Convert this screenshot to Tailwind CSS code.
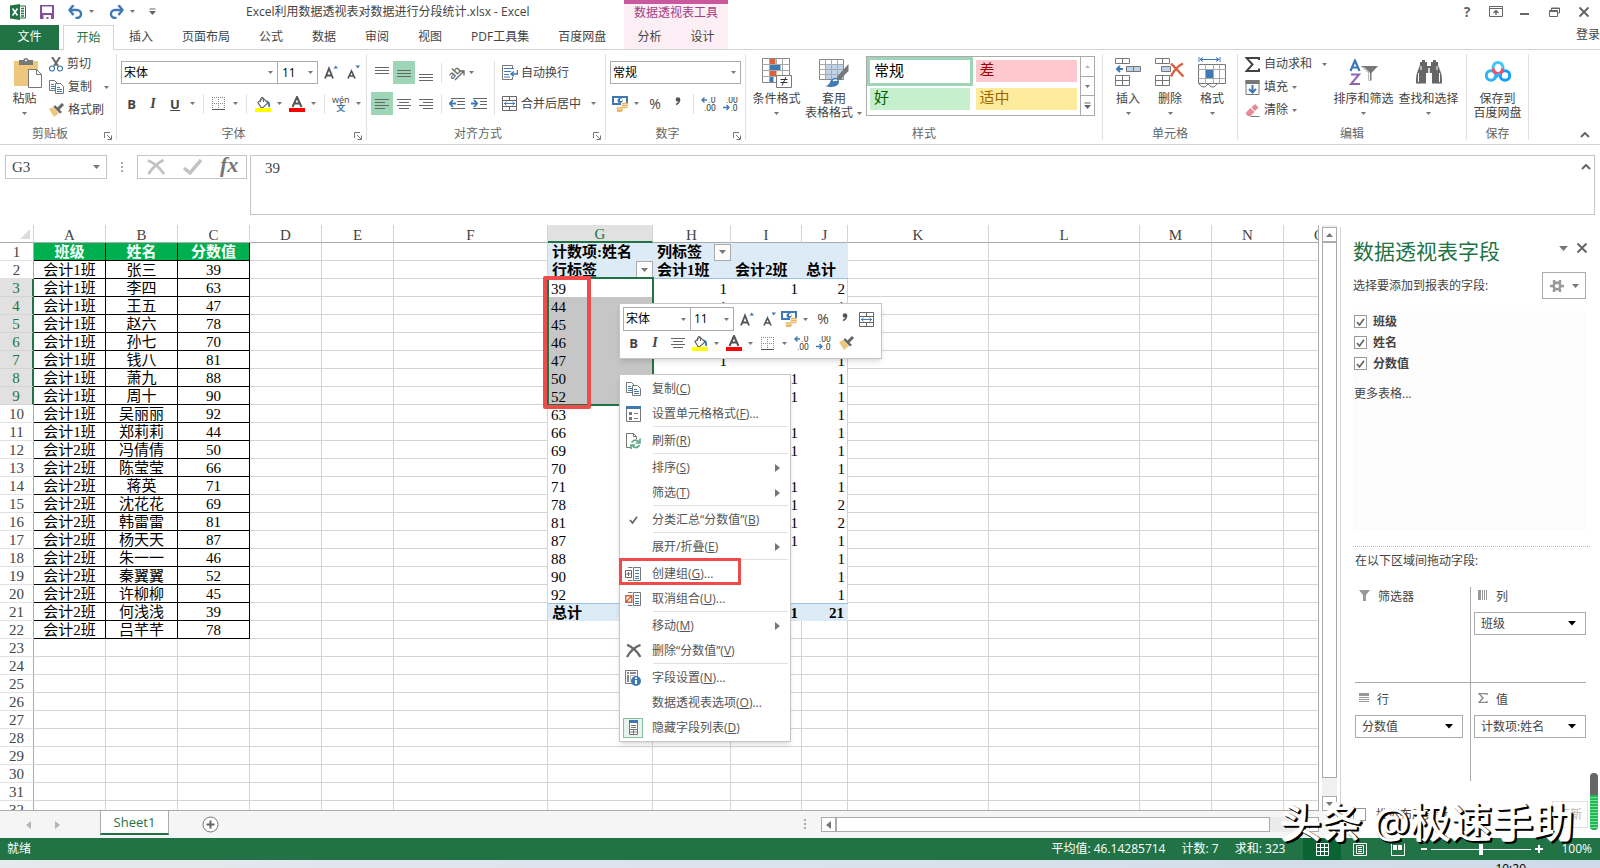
<!DOCTYPE html>
<html lang="zh-CN">
<head>
<meta charset="utf-8">
<title>Excel利用数据透视表对数据进行分段统计.xlsx - Excel</title>
<script src="https://cdn.jsdelivr.net/npm/@tailwindcss/browser@4"></script>
</head>
<body class="flex h-screen flex-col overflow-hidden bg-white font-['Open_Sans','Noto_Sans_CJK_SC',sans-serif] text-xs leading-4 text-[#444]">

<svg class="hidden" aria-hidden="true">
  <symbol id="dn" viewBox="0 0 7 4"><path d="M0 0h7L3.500 4z" fill="#777"/></symbol>
  <symbol id="dnk" viewBox="0 0 8 5"><path d="M0 0h8L4 4.500z" fill="#000"/></symbol>
  <symbol id="up" viewBox="0 0 7 4"><path d="M0 4h7L3.500 0z" fill="#777"/></symbol>
  <symbol id="upl" viewBox="0 0 7 4"><path d="M0 4h7L3.500 0z" fill="#bbb"/></symbol>
  <symbol id="rt" viewBox="0 0 5 8"><path d="M0 0v8l5-4z" fill="#777"/></symbol>
  <symbol id="lt" viewBox="0 0 5 8"><path d="M5 0v8L0 4z" fill="#777"/></symbol>
  <symbol id="x" viewBox="0 0 12 12"><path d="M1.500 1.500l9 9M10.500 1.500l-9 9" stroke="#666" stroke-width="2" fill="none"/></symbol>
  <symbol id="chev" viewBox="0 0 10 6"><path d="M1 5l4-4 4 4" stroke="#666" stroke-width="2" fill="none"/></symbol>
  <symbol id="launch" viewBox="0 0 8 8"><path d="M.5 6V.5H6M3 3l4 4M7.500 3.500v4h-4" stroke="#777" fill="none"/></symbol>
  <symbol id="xl" viewBox="0 0 16 16"><path d="M9 2h6.500v12H9" fill="#fff" stroke="#217346"/><path d="M11 4.500h3M11 7h3M11 9.500h3M11 12h3" stroke="#217346" stroke-width="1.500"/><path d="M0 1.500L10 0v16L0 14.500z" fill="#217346"/><path d="M2.500 4.500l5 7M7.500 4.500l-5 7" stroke="#fff" stroke-width="1.600"/></symbol>
  <symbol id="save" viewBox="0 0 14 14"><path d="M0 0h14v14H0z" fill="#8151a0"/><path d="M2 1.500h10V8H2zM3.500 10h7.500v4H8.500v-2H6.500v2h-3z" fill="#fff"/></symbol>
  <symbol id="undo" viewBox="0 0 15 14"><path d="M1 5h8a4 4 0 0 1 0 8H7.500" stroke="#3f79b5" stroke-width="2.400" fill="none"/><path d="M5.500 0L1.500 5l4 5" stroke="#3f79b5" stroke-width="2.400" fill="none"/></symbol>
  <symbol id="redo" viewBox="0 0 15 14"><path d="M14 5H6a4 4 0 0 0 0 8h1.500" stroke="#3f79b5" stroke-width="2.400" fill="none"/><path d="M9.500 0l4 5-4 5" stroke="#3f79b5" stroke-width="2.400" fill="none"/></symbol>
  <symbol id="qat" viewBox="0 0 7 7"><path d="M.5 1h6" stroke="#666"/><path d="M0 3h7L3.500 7z" fill="#666"/></symbol>
  <symbol id="ropt" viewBox="0 0 14 11"><path d="M.5.5h13v10H.5zM.5 2.500h13" stroke="#666" fill="none"/><path d="M7 9V5M4.500 7L7 4.500 9.500 7" stroke="#666" stroke-width="1.300" fill="none"/></symbol>
  <symbol id="rest" viewBox="0 0 11 10"><path d="M2.500 3V1h8v5h-2M.5 3.500h8v6h-8zM.5 4.500h8M2.500 1.500h8" stroke="#666" fill="none"/></symbol>
  <symbol id="paste" viewBox="0 0 28 30"><path d="M0 3h24v25H0z" fill="#edc77c"/><path d="M5 2h4q3-4 6 0h4v5H5z" fill="#777"/><circle cx="12" cy="2.500" r="1" fill="#fff"/><path d="M14.500 11.500h8l5 5v13h-13z" fill="#fff" stroke="#777"/><path d="M22.500 11.500v5h5" fill="none" stroke="#777"/></symbol>
  <symbol id="cut" viewBox="0 0 14 15"><path d="M3 0l6 9M11 0L5 9" stroke="#666" stroke-width="2"/><circle cx="3" cy="11.500" r="2.500" fill="#fff" stroke="#3f79b5" stroke-width="1.200"/><circle cx="11" cy="11.500" r="2.500" fill="#fff" stroke="#3f79b5" stroke-width="1.200"/></symbol>
  <symbol id="copy" viewBox="0 0 15 14"><path d="M.5.5h5l3 3v7h-8z" fill="#fff" stroke="#777"/><path d="M2 4.500h3M2 6.500h4M2 8.500h4" stroke="#3f79b5"/><path d="M6.500 3.500h5l3 3v7h-8z" fill="#fff" stroke="#777"/><path d="M8 7.500h3M8 9.500h5M8 11.500h5" stroke="#3f79b5"/></symbol>
  <symbol id="brush" viewBox="0 0 16 14"><path d="M0 6l4-2 6 6-5 4z" fill="#edc77c"/><path d="M6 2l7 7-2 1.500L4.500 4z" fill="#666"/><path d="M9 6l5-5" stroke="#666" stroke-width="3"/></symbol>
  <symbol id="Abig" viewBox="0 0 14 15"><path d="M9.500 3.500l2.250-3 2.250 3z" fill="#3f79b5"/><path d="M1 13.500L5 3.500 9 13.500M2.500 10.500h5" fill="none" stroke="#555" stroke-width="1.800"/></symbol>
  <symbol id="Asm" viewBox="0 0 14 15"><path d="M9.500.5l2.250 3 2.250-3z" fill="#3f79b5"/><path d="M2 13.500L5.500 6 9 13.500M3.500 11h4" fill="none" stroke="#555" stroke-width="1.700"/></symbol>
  <symbol id="bord" viewBox="0 0 13 13"><path d="M.5 0v12M6.500 0v12M12.500 0v12M0 .5h13M0 6.500h13" stroke="#888" stroke-dasharray="1 1" fill="none"/><path d="M0 12.500h13" stroke="#555"/></symbol>
  <symbol id="fill" viewBox="0 0 16 16"><path d="M3 6.500L8 2l5 5-5 4.500H6z" fill="#fff" stroke="#666" stroke-width="1.200"/><path d="M5.500 6V2.500Q7 -.5 8.500 2.500V6" fill="none" stroke="#666"/><path d="M11 4.500q5 0 4 6.500-2 1-2-3z" fill="#3f79b5"/><path d="M0 12h16v4H0z" fill="#ff0"/></symbol>
  <symbol id="fcol" viewBox="0 0 16 16"><path d="M3.500 11L8 1l4.500 10M5 7.500h6" fill="none" stroke="#555" stroke-width="2"/><path d="M0 12h16v4H0z" fill="red"/></symbol>
  <symbol id="at" viewBox="0 0 14 12"><path d="M0 .5h14M0 3.500h14M0 6.500h14" stroke="#666"/></symbol>
  <symbol id="am" viewBox="0 0 14 12"><path d="M0 3.500h14M0 6.500h14M0 9.500h14" stroke="#666"/></symbol>
  <symbol id="ab" viewBox="0 0 14 12"><path d="M0 5.500h14M0 8.500h14M0 11.500h14" stroke="#666"/></symbol>
  <symbol id="al" viewBox="0 0 14 12"><path d="M0 1.500h14M0 4.500h10M0 7.500h14M0 10.500h10" stroke="#666"/></symbol>
  <symbol id="ac" viewBox="0 0 14 12"><path d="M0 1.500h14M2 4.500h10M0 7.500h14M2 10.500h10" stroke="#666"/></symbol>
  <symbol id="ar" viewBox="0 0 14 12"><path d="M0 1.500h14M4 4.500h10M0 7.500h14M4 10.500h10" stroke="#666"/></symbol>
  <symbol id="orient" viewBox="0 0 16 16"><text x="-1" y="11" transform="rotate(-45 6 8)" font-family="Open Sans" font-size="11" font-weight="600" fill="#666">ab</text><path d="M6 15l9-9M10.500 6H15v4.500" stroke="#666" stroke-width="1.300" fill="none"/></symbol>
  <symbol id="outd" viewBox="0 0 16 12"><path d="M2 .5h14M8 3.500h8M8 6.500h8M2 10.500h14" stroke="#666"/><path d="M7 5.500H1M4 2L.8 5.500 4 9" stroke="#3f79b5" stroke-width="1.800" fill="none"/></symbol>
  <symbol id="ind" viewBox="0 0 16 12"><path d="M2 .5h14M9 3.500h7M9 6.500h7M2 10.500h14" stroke="#666"/><path d="M0 5.500h6M3 2l3.200 3.500L3 9" stroke="#3f79b5" stroke-width="1.800" fill="none"/></symbol>
  <symbol id="wrap" viewBox="0 0 16 15"><path d="M10.500 4V.5H.5v14h10V12" stroke="#777" fill="none"/><path d="M2 3.500h10M2 6.500h7M2 9.500h5M2 12h6" stroke="#3f79b5"/><path d="M15.500 5v4H9.500M12 6.500L9 9l3 2.500" stroke="#3f79b5" stroke-width="1.400" fill="none"/></symbol>
  <symbol id="merge" viewBox="0 0 15 15"><path d="M.5.5h14v14H.5zM.5 4.500h14M.5 10.500h14M7.500.5v4M7.500 10.500v4" stroke="#666" fill="none"/><path d="M2 7.500h11M4.500 5.500l-2 2 2 2M10.500 5.500l2 2-2 2" stroke="#3f79b5" fill="none"/></symbol>
  <symbol id="coin" viewBox="0 0 16 16"><path d="M0 0h16v9H0z" fill="#3f79b5"/><path d="M2 2h12v5H2z" fill="#fff"/><circle cx="8" cy="4.500" r="2.500" fill="#3f79b5"/><path d="M8 3h2v2H8z" fill="#fff"/><path d="M9 7h7v6H9zM4 11h7v5H4z" fill="#fff"/><path d="M10 7.500h6M9.500 9.500h6.500M9.500 11.500h6M4.500 12h6M5 14h6M5 15.500h5" stroke="#e8b868" stroke-width="1.400"/></symbol>
  <symbol id="comma" viewBox="0 0 6 9"><circle cx="3" cy="2.500" r="2.300" fill="#555"/><path d="M4.600 2.500Q4.600 6 1 7.500" stroke="#555" stroke-width="1.400" fill="none"/></symbol>
  <symbol id="incd" viewBox="0 0 15 14"><path d="M6 3H1M3.500.5L1 3l2.500 2.500" stroke="#3f79b5" stroke-width="1.400" fill="none"/><text x="7.500" y="6" font-family="Roboto" font-size="8.500" fill="#333">.0</text><text x="3" y="13.500" font-family="Roboto" font-size="8.500" fill="#333">.00</text></symbol>
  <symbol id="decd" viewBox="0 0 15 14"><path d="M0 10.500h5.500M3.500 8L6 10.500 3.500 13" stroke="#3f79b5" stroke-width="1.400" fill="none"/><text x="3" y="6" font-family="Roboto" font-size="8.500" fill="#333">.00</text><text x="7.500" y="13.500" font-family="Roboto" font-size="8.500" fill="#333">.0</text></symbol>
  <symbol id="cond" viewBox="0 0 30 30"><path d="M.5.5h27v24H.5z" fill="#fff" stroke="#888"/><path d="M7.500 1h6v5h-6zM7.500 13h7v5h-7z" fill="#d9603f"/><path d="M7.500 7h11v5h-11zM7.500 19h4v5h-4z" fill="#3f79b5"/><path d="M.5 6.500h27M.5 12.500h27M.5 18.500h27M7.500.5v24M14.500.5v6M20.500.5v24" stroke="#aaa" fill="none"/><path d="M14.500 17.500h15v12h-15z" fill="#fff" stroke="#777"/><path d="M18.500 21.500h7M18.500 24.500h7M24 19l-4 8.500" stroke="#333"/></symbol>
  <symbol id="tfmt" viewBox="0 0 30 30"><path d="M.5.500h24v20H.5z" fill="#fff" stroke="#888"/><path d="M6 6h18v14H6z" fill="#bed2e8"/><path d="M.5 5.500h24M.5 10.500h24M.5 15.500h24M6.500.500v20M12.500.500v20M18.500.500v20" stroke="#aaa"/><path d="M29.500 5v7l-7 7-3-3z" fill="#777"/><circle cx="20.500" cy="18.500" r="2.500" fill="#777"/><path d="M6 27q4 0 6-6 4-4 7-1 3 4-2 7-5 2-11 0z" fill="#3f79b5"/><path d="M14 22q3-2 4 0" stroke="#fff" stroke-width="1.500" fill="none"/></symbol>
  <symbol id="cins" viewBox="0 0 27 28"><path d="M.5.500h14v5H.5zM7.500.500v5M.5 17.500h14v10H.5zM7.500 17.500v10M.5 22.500h14" stroke="#777" fill="#fff"/><path d="M11.500 8.500h14v5h-14zM18.500 8.500v5" fill="#bed2e8" stroke="#777"/><path d="M8 11H2M5 8l-3 3 3 3" stroke="#3f79b5" stroke-width="2" fill="none"/></symbol>
  <symbol id="cdel" viewBox="0 0 30 28"><path d="M.5.500h14v5H.5zM7.500.500v5M.5 17.500h14v10H.5zM7.500 17.500v10M.5 22.500h14" stroke="#777" fill="#fff"/><path d="M6.500 8.500h9v5h-9z" fill="#bed2e8" stroke="#777"/><path d="M16 5.500l12.500 13M28 5.500q-8 4-12 13" stroke="#d9603f" stroke-width="2.500" fill="none"/></symbol>
  <symbol id="cfmt" viewBox="0 0 28 31"><path d="M1 0v5M22 0v5M2 2.500h19M5 .500l-3 2 3 2M18 .500l3 2-3 2" stroke="#3f79b5" fill="none"/><path d="M.5 7.500h27v19H.5z" fill="#fff" stroke="#777"/><path d="M.5 12.500h27M.5 21.500h27M7.500 7.500v19M15.500 7.500v19M21.500 7.500v19" stroke="#aaa"/><path d="M8 13h7v8H8z" fill="#3f79b5"/><path d="M1 27q3 4 6 3l3-3q3 4 6 3l3-3" stroke="#777" fill="none"/></symbol>
  <symbol id="sum" viewBox="0 0 15 15"><path d="M14 3V1H1.500l6 6.500-6 6.500H14v-2.500" stroke="#444" stroke-width="2" fill="none"/></symbol>
  <symbol id="filld" viewBox="0 0 14 15"><path d="M.5.500h13v14H.5z" fill="#fff" stroke="#777"/><path d="M0 0h14v4H0z" fill="#777"/><path d="M7 5v7M3.500 9L7 12.500 10.500 9" stroke="#3f79b5" stroke-width="2" fill="none"/></symbol>
  <symbol id="eras" viewBox="0 0 14 13"><path d="M6 3l4-3 3 4-4 3z" fill="#e8899a"/><path d="M5 4l4 4-4 4H2L0 9z" fill="#e8899a"/><path d="M5 12.500h9" stroke="#777"/></symbol>
  <symbol id="sort" viewBox="0 0 30 27"><path d="M1.500 12L6 1.500 10.500 12M3 8.500h6" stroke="#3f79b5" stroke-width="2.200" fill="none"/><path d="M2 15.500h8L2 25h9" stroke="#9163b5" stroke-width="2" fill="none"/><path d="M12 7h17l-6.500 7v7.500h-3V14z" fill="#777"/><path d="M14.500 8l6 6v7" stroke="#fff" fill="none"/></symbol>
  <symbol id="bino" viewBox="0 0 26 24"><path d="M4 5V2h2V0h3v2h2v4h4V2h2V0h3v2h2v3l3 8q1 2 1 10.500H16V13h-6v10.500H0Q0 15 1 13z" fill="#666"/><path d="M13 8v5" stroke="#fff" stroke-width="1.500"/><path d="M2.500 13v9M23.500 13v9M5 6v4M21 6v4" stroke="#fff"/></symbol>
  <symbol id="pan" viewBox="0 0 26 21"><circle cx="6" cy="14.500" r="4.700" fill="none" stroke="#2fb5f5" stroke-width="3"/><circle cx="20" cy="14.500" r="4.700" fill="none" stroke="#12a0f8" stroke-width="3"/><path d="M8 8q0-6.500 5-6.500T18 8" fill="none" stroke="#45c8f8" stroke-width="3"/><path d="M8.300 7.500q.500 5 4.700 5t4.700-5" fill="none" stroke="#f2506a" stroke-width="3"/><path d="M15 12.500l-6 5" stroke="#2fb5f5" stroke-width="3"/></symbol>
  <symbol id="bigx" viewBox="0 0 18 16"><path d="M1 1.500Q10 5 17 15M16.500 1Q7 6 1.500 15" stroke="#c3c3c3" stroke-width="2.800" fill="none"/></symbol>
  <symbol id="bigc" viewBox="0 0 19 16"><path d="M1 9l6 5L18 1" stroke="#c3c3c3" stroke-width="3.500" fill="none"/></symbol>
  <symbol id="dots" viewBox="0 0 2 10"><path d="M0 0h2v2H0zM0 4h2v2H0zM0 8h2v2H0z" fill="#aaa"/></symbol>
  <symbol id="gear" viewBox="0 0 14 12"><circle cx="7" cy="6" r="3.400" fill="none" stroke="#999" stroke-width="2.600"/><path d="M4 0v3M10 0v3M4 9v3M10 9v3M0 6h3M11 6h3" stroke="#999" stroke-width="2.400"/></symbol>
  <symbol id="tick" viewBox="0 0 9 8"><path d="M1 4l2.500 3L8 .800" stroke="#666" stroke-width="1.700" fill="none"/></symbol>
  <symbol id="funnel" viewBox="0 0 11 11"><path d="M0 0h11L7 5v6H4V5z" fill="#999"/></symbol>
  <symbol id="cols" viewBox="0 0 10 10"><path d="M0 0h3v10H0zM4 0h1v10H4zM6 0h1v10H6zM8 0h1v10H8z" fill="#999"/></symbol>
  <symbol id="rows" viewBox="0 0 10 10"><path d="M0 0h10v3H0zM0 4h10v1H0zM0 6h10v1H0zM0 8h10v1H0z" fill="#999"/></symbol>
  <symbol id="sigma" viewBox="0 0 10 10"><path d="M9 2V.600H1L5 5 1 9.400h8V8" stroke="#888" stroke-width="1.400" fill="none"/></symbol>
  <symbol id="plus" viewBox="0 0 17 17"><circle cx="8.500" cy="8.500" r="7.500" fill="#fff" stroke="#777"/><path d="M8.500 4.500v8M4.500 8.500h8" stroke="#666" stroke-width="2"/></symbol>
  <symbol id="fmtc" viewBox="0 0 15 16"><path d="M.5.500h14v15H.5z" fill="#fff" stroke="#777"/><path d="M0 0h15v3H0z" fill="#3f79b5"/><path d="M3 6h3v3H3zM3 11h3v3H3z" fill="#777"/><path d="M8 7.500h4M8 12.500h4" stroke="#777"/></symbol>
  <symbol id="refr" viewBox="0 0 15 16"><path d="M5 14.500H.5V.500h7l3 3V6M7.500.500v3h3" stroke="#777" fill="none"/><path d="M5.500 9.500q4-4.500 7.500-.500M14 5.500V10H9.500M13.500 12q-3 4.500-7 1M5 16v-4h4" stroke="#5fa98a" stroke-width="1.700" fill="none"/></symbol>
  <symbol id="grp" viewBox="0 0 16 14"><path d="M8.500.500h7v13h-7zM3 .500h4.500M3 13.500h4.500" stroke="#777" fill="none"/><path d="M10 3.500h4M10 6.500h4M10 9.500h4M10 11.500h4" stroke="#3f79b5"/><path d="M.5 3.500h6v7h-6zM3.500 5v4M1.500 7h4" stroke="#666" fill="none"/></symbol>
  <symbol id="ugrp" viewBox="0 0 16 14"><path d="M8.500.500h7v13h-7zM3 .500h4.500M3 13.500h4.500" stroke="#777" fill="none"/><path d="M10 3.500h4M10 6.500h4M10 9.500h4M10 11.500h4" stroke="#3f79b5"/><path d="M.8 3.800h6v6.500h-6zM6.500 4L1 10" stroke="#d9603f" stroke-width="1.400" fill="none"/></symbol>
  <symbol id="delx" viewBox="0 0 15 14"><path d="M1 .800Q9 4 14.500 13M14.500 1Q6 4 1 13" stroke="#666" stroke-width="2.300" fill="none"/></symbol>
  <symbol id="finfo" viewBox="0 0 16 16"><path d="M.5.500h12v13H.5z" fill="#fff" stroke="#777"/><path d="M2 2h2v2H2zM5 2h6v2H5zM2 5h2v7H2z" fill="#888"/><path d="M5.500 5.500h5v6h-5z" stroke="#bbb" fill="none"/><circle cx="11" cy="11" r="5" fill="#3f79b5"/><path d="M10 10h2v4h-2zM10 7.500h2v1.500h-2z" fill="#fff"/></symbol>
  <symbol id="flist" viewBox="0 0 9 15"><path d="M.5.500h8v14h-8z" fill="#fff" stroke="#777"/><path d="M0 0h9v3H0z" fill="#3f79b5"/><path d="M2 5.500h5M2 7.500h5M.500 9.500h8M.500 12h8M4.500 9.500V14" stroke="#777"/></symbol>
  <symbol id="vnorm" viewBox="0 0 13 13"><path d="M.5.500h12v12H.5zM.5 4.500h12M.5 8.500h12M4.500.500v12M8.500.500v12" stroke="#fff" fill="none"/></symbol>
  <symbol id="vpage" viewBox="0 0 14 13"><path d="M.5.500h13v12H.5zM3.500 2.500h7v8h-7zM5 4.500h4M5 6.500h4M5 8.500h4" stroke="#fff" fill="none"/></symbol>
  <symbol id="vbrk" viewBox="0 0 14 13"><path d="M.5.500v12h13V.500" stroke="#fff" fill="none"/><path d="M2 2h4v5H2zM7 2h4v5H7z" fill="#fff"/></symbol>
</svg>

<header class="shrink-0">
  <div class="flex h-[25px] items-start">
    <div class="flex h-[23px] w-[624px] items-center">
      <svg class="ml-2.5 size-4"><use href="#xl"/></svg>
      <button aria-label="保存" class="ml-3.5"><svg class="size-3.5"><use href="#save"/></svg></button>
      <button aria-label="撤销" class="ml-3.5 flex items-center gap-1.5"><svg class="h-3.5 w-[15px]"><use href="#undo"/></svg><svg class="h-[3px] w-[5px]"><use href="#dn"/></svg></button>
      <button aria-label="恢复" class="ml-[15px] flex items-center gap-1.5"><svg class="h-3.5 w-[15px]"><use href="#redo"/></svg><svg class="h-[3px] w-[5px]"><use href="#dn"/></svg></button>
      <button aria-label="自定义快速访问工具栏" class="ml-3.5"><svg class="size-[7px]"><use href="#qat"/></svg></button>
      <h1 class="ml-[90px] whitespace-nowrap">Excel利用数据透视表对数据进行分段统计.xlsx - Excel</h1>
    </div>
    <div class="h-full w-[104px] border-t-4 border-[#c9589c] bg-[#fbeef5] text-center leading-[18px] text-[#a63c80]">数据透视表工具</div>
    <div class="ml-auto flex h-[23px] items-center pr-2.5">
      <button aria-label="帮助" class="w-5 text-sm font-bold text-[#666]">?</button>
      <button aria-label="功能区显示选项" class="ml-3"><svg class="h-[11px] w-3.5"><use href="#ropt"/></svg></button>
      <button aria-label="最小化" class="ml-[17px] flex h-4 w-[9px] items-center"><span class="mt-1 h-0.5 w-full bg-[#666]"></span></button>
      <button aria-label="还原" class="ml-5"><svg class="h-2.5 w-[11px]"><use href="#rest"/></svg></button>
      <button aria-label="关闭" class="ml-[18px]"><svg class="size-3"><use href="#x"/></svg></button>
    </div>
  </div>
  <nav class="flex h-[25px] border-b border-[#d4d4d4]">
    <div class="flex w-[624px] shrink-0 items-center">
      <button class="h-[25px] w-[59px] bg-[#217346] text-white">文件</button>
      <button class="ml-1 h-[25px] w-[51px] self-start border border-b-0 border-[#d4d4d4] bg-white text-[#217346]">开始</button>
      <div class="ml-[15px] flex gap-[29px] whitespace-nowrap">
        <button>插入</button><button>页面布局</button><button>公式</button><button>数据</button><button>审阅</button><button>视图</button><button>PDF工具集</button><button>百度网盘</button>
      </div>
    </div>
    <div class="flex w-[104px] items-center justify-center gap-[29px] bg-[#fbeef5]"><button>分析</button><button>设计</button></div>
    <a href="#login" class="ml-auto pt-0.5 whitespace-nowrap">登录</a>
  </nav>
</header>

<section aria-label="功能区" class="flex h-[95px] shrink-0 border-b border-[#d4d4d4] pt-1 pb-1 leading-[14px]">
  <!-- 剪贴板 -->
  <div class="flex w-[117px] shrink-0 flex-col border-r border-[#e1e1e1]">
    <div class="flex flex-1">
      <button class="flex w-[49px] flex-col items-center pt-1"><svg class="ml-1.5 h-[30px] w-7"><use href="#paste"/></svg><span class="mt-1">粘贴</span><svg class="mt-1.5 h-[3px] w-[5px]"><use href="#dn"/></svg></button>
      <div class="flex flex-col gap-[3px]">
        <button class="flex h-5 items-center gap-1"><svg class="h-[15px] w-3.5"><use href="#cut"/></svg>剪切</button>
        <button class="flex h-5 items-center gap-1"><svg class="h-3.5 w-[15px]"><use href="#copy"/></svg>复制<svg class="ml-2 h-[3px] w-[5px]"><use href="#dn"/></svg></button>
        <button class="flex h-5 items-center gap-[3px]"><svg class="h-3.5 w-4"><use href="#brush"/></svg>格式刷</button>
      </div>
    </div>
    <div class="relative h-4 pr-4 text-center leading-5 text-[#666]">剪贴板<button aria-label="剪贴板选项" class="absolute right-1 bottom-0"><svg class="size-2"><use href="#launch"/></svg></button></div>
  </div>
  <!-- 字体 -->
  <div class="flex w-[250px] shrink-0 flex-col border-r border-[#e1e1e1]">
    <div class="flex flex-1 flex-col gap-2 pt-[7px] pl-1">
      <div class="flex h-[23px] items-center">
        <div class="relative h-full w-[157px] border border-[#ababab]"><select aria-label="字体" class="h-full w-full appearance-none pl-0.5 text-black"><option>宋体</option></select><svg class="pointer-events-none absolute top-[9px] right-1 h-[3px] w-[5px]"><use href="#dn"/></svg></div>
        <div class="relative h-full w-10 border border-l-0 border-[#ababab]"><select aria-label="字号" class="h-full w-full appearance-none pl-1 text-black"><option>11</option></select><svg class="pointer-events-none absolute top-[9px] right-1 h-[3px] w-[5px]"><use href="#dn"/></svg></div>
        <button aria-label="增大字号" class="ml-1.5"><svg class="h-[15px] w-3.5"><use href="#Abig"/></svg></button>
        <button aria-label="减小字号" class="ml-2"><svg class="h-[15px] w-3.5"><use href="#Asm"/></svg></button>
      </div>
      <div class="flex h-[23px] items-center">
        <button class="w-[21px] text-[13px] font-bold">B</button>
        <button class="w-[22px] font-['Liberation_Serif'] text-sm font-bold italic">I</button>
        <button class="w-[22px] text-[13px] font-bold underline">U</button>
        <svg class="ml-1 h-[3px] w-[5px]"><use href="#dn"/></svg>
        <span class="ml-2 h-5 w-px bg-[#e1e1e1]"></span>
        <button aria-label="边框" class="ml-2 flex items-center gap-2"><svg class="size-[13px]"><use href="#bord"/></svg><svg class="h-[3px] w-[5px]"><use href="#dn"/></svg></button>
        <span class="ml-2 h-5 w-px bg-[#e1e1e1]"></span>
        <button aria-label="填充颜色" class="ml-2 flex items-center gap-1.5"><svg class="size-4"><use href="#fill"/></svg><svg class="h-[3px] w-[5px]"><use href="#dn"/></svg></button>
        <button aria-label="字体颜色" class="ml-[7px] flex items-center gap-1.5"><svg class="size-4"><use href="#fcol"/></svg><svg class="h-[3px] w-[5px]"><use href="#dn"/></svg></button>
        <span class="ml-2 h-5 w-px bg-[#e1e1e1]"></span>
        <button aria-label="拼音" class="ml-[7px] flex items-center gap-1.5"><span class="flex flex-col items-center text-[9px] leading-[8px]">wén<span class="font-bold text-[#3f79b5]">文</span></span><svg class="h-[3px] w-[5px]"><use href="#dn"/></svg></button>
      </div>
    </div>
    <div class="relative h-4 pr-4 text-center leading-5 text-[#666]">字体<button aria-label="字体选项" class="absolute right-1 bottom-0"><svg class="size-2"><use href="#launch"/></svg></button></div>
  </div>
  <!-- 对齐方式 -->
  <div class="flex w-[239px] shrink-0 flex-col border-r border-[#e1e1e1]">
    <div class="flex flex-1 pt-[7px] pl-1">
      <div class="flex flex-col gap-2">
        <div class="flex h-[23px] items-center">
          <button aria-label="顶端对齐" class="flex h-full w-[22px] items-center justify-center"><svg class="h-3 w-3.5"><use href="#at"/></svg></button>
          <button aria-label="垂直居中" class="flex h-full w-[22px] items-center justify-center bg-[#9fd5b7]"><svg class="h-3 w-3.5"><use href="#am"/></svg></button>
          <button aria-label="底端对齐" class="flex h-full w-[22px] items-center justify-center pt-1"><svg class="h-3 w-3.5"><use href="#ab"/></svg></button>
          <span class="ml-1 h-5 w-px bg-[#e1e1e1]"></span>
          <button aria-label="方向" class="ml-[7px] flex items-center gap-1"><svg class="size-4"><use href="#orient"/></svg><svg class="h-[3px] w-[5px]"><use href="#dn"/></svg></button>
        </div>
        <div class="flex h-[23px] items-center">
          <button aria-label="左对齐" class="flex h-full w-[22px] items-center justify-center bg-[#9fd5b7]"><svg class="h-3 w-3.5"><use href="#al"/></svg></button>
          <button aria-label="居中" class="flex h-full w-[22px] items-center justify-center"><svg class="h-3 w-3.5"><use href="#ac"/></svg></button>
          <button aria-label="右对齐" class="flex h-full w-[22px] items-center justify-center"><svg class="h-3 w-3.5"><use href="#ar"/></svg></button>
          <span class="ml-1 h-5 w-px bg-[#e1e1e1]"></span>
          <button aria-label="减少缩进量" class="ml-[7px]"><svg class="h-3 w-4"><use href="#outd"/></svg></button>
          <button aria-label="增加缩进量" class="ml-1.5"><svg class="h-3 w-4"><use href="#ind"/></svg></button>
        </div>
      </div>
      <div class="ml-[7px] flex h-[54px] flex-col gap-2 border-l border-[#e1e1e1] pl-[7px]">
        <button class="flex h-[23px] items-center gap-[3px]"><svg class="h-[15px] w-4"><use href="#wrap"/></svg>自动换行</button>
        <button class="flex h-[23px] items-center gap-1"><svg class="size-[15px]"><use href="#merge"/></svg>合并后居中<svg class="ml-1.5 h-[3px] w-[5px]"><use href="#dn"/></svg></button>
      </div>
    </div>
    <div class="relative h-4 pr-8 pl-4 text-center leading-5 text-[#666]">对齐方式<button aria-label="对齐选项" class="absolute right-1 bottom-0"><svg class="size-2"><use href="#launch"/></svg></button></div>
  </div>
  <!-- 数字 -->
  <div class="flex w-[140px] shrink-0 flex-col border-r border-[#e1e1e1]">
    <div class="flex flex-1 flex-col gap-2 px-1 pt-[7px]">
      <div class="relative h-[23px] border border-[#ababab]"><select aria-label="数字格式" class="h-full w-full appearance-none pl-0.5 text-black"><option>常规</option></select><svg class="pointer-events-none absolute top-[9px] right-1 h-[3px] w-[5px]"><use href="#dn"/></svg></div>
      <div class="flex h-[23px] items-center">
        <button aria-label="会计数字格式" class="ml-0.5 flex items-center gap-1.5"><svg class="size-4"><use href="#coin"/></svg><svg class="h-[3px] w-[5px]"><use href="#dn"/></svg></button>
        <button class="ml-2 w-4 text-sm">%</button>
        <button aria-label="千位分隔" class="ml-3 mb-1"><svg class="h-[9px] w-1.5"><use href="#comma"/></svg></button>
        <span class="ml-3 h-5 w-px bg-[#e1e1e1]"></span>
        <button aria-label="增加小数位数" class="ml-[7px]"><svg class="h-3.5 w-[15px]"><use href="#incd"/></svg></button>
        <button aria-label="减少小数位数" class="ml-[7px]"><svg class="h-3.5 w-[15px]"><use href="#decd"/></svg></button>
      </div>
    </div>
    <div class="relative h-4 pr-4 text-center leading-5 text-[#666]">数字<button aria-label="数字选项" class="absolute right-1 bottom-0"><svg class="size-2"><use href="#launch"/></svg></button></div>
  </div>
  <!-- 样式 -->
  <div class="flex w-[357px] shrink-0 flex-col border-r border-[#e1e1e1]">
    <div class="flex flex-1">
      <button class="ml-1.5 flex w-[49px] flex-col items-center pt-1"><svg class="size-[30px]"><use href="#cond"/></svg><span class="mt-1 whitespace-nowrap">条件格式</span><svg class="mt-1.5 h-[3px] w-[5px]"><use href="#dn"/></svg></button>
      <button class="ml-1 flex w-[58px] flex-col items-center pt-1"><svg class="mt-px size-[30px]"><use href="#tfmt"/></svg><span class="mt-[3px]">套用</span><span class="flex items-center gap-1 self-start whitespace-nowrap">表格格式<svg class="h-[3px] w-[5px]"><use href="#dn"/></svg></span></button>
      <div class="mt-0.5 ml-[3px] flex h-[60px] w-[229px] border border-[#ababab] font-['Liberation_Serif','Noto_Sans_CJK_SC',serif] text-[15px]">
        <div class="grid flex-1 grid-cols-2 gap-x-0.5 text-left">
          <button class="border-[3px] border-[#9fd5b7] pb-0.5 pl-1 text-left text-black">常规</button>
          <button class="mt-[3px] mr-[3px] mb-1 ml-px bg-[#ffc7ce] pb-0.5 pl-1 text-left text-[#9c0006]">差</button>
          <button class="mt-0.5 mr-[3px] mb-[5px] ml-[3px] bg-[#c6efce] pb-0.5 pl-1 text-left text-[#006100]">好</button>
          <button class="mt-0.5 mr-[3px] mb-[5px] ml-px bg-[#ffeb9c] pb-0.5 pl-1 text-left text-[#9c6500]">适中</button>
        </div>
        <div class="flex w-3.5 flex-col border-l border-[#ababab]">
          <button aria-label="上一行" class="flex flex-1 items-center justify-center"><svg class="h-[3px] w-[5px]"><use href="#upl"/></svg></button>
          <button aria-label="下一行" class="flex flex-1 items-center justify-center border-y border-[#ababab]"><svg class="h-[3px] w-[5px]"><use href="#dn"/></svg></button>
          <button aria-label="其他" class="flex flex-1 items-center justify-center"><svg class="size-[7px]"><use href="#qat"/></svg></button>
        </div>
      </div>
    </div>
    <div class="h-4 text-center leading-5 text-[#666]">样式</div>
  </div>
  <!-- 单元格 -->
  <div class="flex w-[135px] shrink-0 flex-col border-r border-[#e1e1e1]">
    <div class="flex flex-1 pl-1">
      <button class="flex w-[42px] flex-col items-center pt-1"><svg class="mb-0.5 h-7 w-[27px]"><use href="#cins"/></svg><span class="mt-1">插入</span><svg class="mt-1.5 h-[3px] w-[5px]"><use href="#dn"/></svg></button>
      <button class="flex w-[42px] flex-col items-center pt-1"><svg class="mb-0.5 h-7 w-[30px]"><use href="#cdel"/></svg><span class="mt-1">删除</span><svg class="mt-1.5 h-[3px] w-[5px]"><use href="#dn"/></svg></button>
      <button class="flex w-[42px] flex-col items-center pt-[3px]"><svg class="h-[31px] w-7"><use href="#cfmt"/></svg><span class="mt-1">格式</span><svg class="mt-1.5 h-[3px] w-[5px]"><use href="#dn"/></svg></button>
    </div>
    <div class="h-4 text-center leading-5 text-[#666]">单元格</div>
  </div>
  <!-- 编辑 -->
  <div class="flex w-[229px] shrink-0 flex-col border-r border-[#e1e1e1]">
    <div class="flex flex-1 pl-[7px]">
      <div class="flex w-[86px] flex-col gap-[3px] whitespace-nowrap">
        <button class="flex h-5 items-center gap-1"><svg class="size-[15px]"><use href="#sum"/></svg>自动求和<svg class="ml-1.5 h-[3px] w-[5px]"><use href="#dn"/></svg></button>
        <button class="flex h-5 items-center gap-1"><svg class="h-[15px] w-[15px]"><use href="#filld"/></svg>填充<svg class="h-[3px] w-[5px]"><use href="#dn"/></svg></button>
        <button class="flex h-5 items-center gap-1"><svg class="h-[13px] w-[15px]"><use href="#eras"/></svg>清除<svg class="h-[3px] w-[5px]"><use href="#dn"/></svg></button>
      </div>
      <button class="flex w-[65px] flex-col items-center pt-[5px] whitespace-nowrap"><svg class="mb-0.5 h-[27px] w-[30px]"><use href="#sort"/></svg><span class="mt-1">排序和筛选</span><svg class="mt-1.5 h-[3px] w-[5px]"><use href="#dn"/></svg></button>
      <button class="flex w-[65px] flex-col items-center pt-1.5 whitespace-nowrap"><svg class="mb-1 h-6 w-[26px]"><use href="#bino"/></svg><span class="mt-1">查找和选择</span><svg class="mt-1.5 h-[3px] w-[5px]"><use href="#dn"/></svg></button>
    </div>
    <div class="h-4 text-center leading-5 text-[#666]">编辑</div>
  </div>
  <!-- 保存 -->
  <div class="flex w-[62px] shrink-0 flex-col border-r border-[#e1e1e1]">
    <button class="flex flex-1 flex-col items-center pt-[7px]"><svg class="mb-1.5 h-[21px] w-[26px]"><use href="#pan"/></svg><span class="mt-1">保存到</span><span>百度网盘</span></button>
    <div class="h-4 text-center leading-5 text-[#666]">保存</div>
  </div>
  <button aria-label="折叠功能区" class="mt-auto mr-2.5 mb-0.5 ml-auto"><svg class="h-1.5 w-2.5"><use href="#chev"/></svg></button>
</section>

<section aria-label="编辑栏" class="flex h-20 shrink-0 items-start pt-2.5 pr-[5px] pl-[5px] font-['Liberation_Serif','Noto_Sans_CJK_SC',serif] text-[15px]">
  <div class="flex h-6 w-[102px] items-center border border-[#c6c6c6]">
    <input aria-label="名称框" value="G3" class="w-full min-w-0 flex-1 pl-1.5 outline-none">
    <button aria-label="名称列表" class="mr-1.5"><svg class="h-1 w-[7px]"><use href="#dn"/></svg></button>
  </div>
  <svg class="mt-[7px] ml-3.5 h-2.5 w-0.5"><use href="#dots"/></svg>
  <div class="ml-3.5 flex h-6 w-[110px] items-center border border-[#c6c6c6]">
    <button aria-label="取消" class="ml-[9px]"><svg class="h-4 w-[18px]"><use href="#bigx"/></svg></button>
    <button aria-label="输入" class="ml-[18px]"><svg class="h-4 w-[19px]"><use href="#bigc"/></svg></button>
    <button aria-label="插入函数" class="ml-[18px] pb-1 text-[22px] leading-4 font-bold text-[#777] italic">fx</button>
  </div>
  <div class="ml-[3px] flex h-[60px] flex-1 border border-[#c6c6c6]">
    <textarea aria-label="公式" class="flex-1 resize-none pt-1 pl-3.5 leading-4 outline-none">39</textarea>
    <button aria-label="折叠编辑栏" class="mt-2 mr-[3px] self-start"><svg class="h-1.5 w-2.5"><use href="#chev"/></svg></button>
  </div>
</section>

<main class="flex min-h-0 flex-1">
  <div class="flex min-w-0 flex-1 flex-col">
    <div class="relative flex min-h-0 flex-1">
      <div class="relative min-w-0 flex-1 overflow-hidden border-r border-b border-[#ababab]">
        <table class="w-[1356px] table-fixed border-separate border-spacing-0 font-['Liberation_Serif','Noto_Sans_CJK_SC',serif] text-[15px] leading-[15px] text-black">
          <colgroup><col class="w-[34px]"><col class="w-[72px]"><col class="w-[72px]"><col class="w-[72px]"><col class="w-[72px]"><col class="w-[72px]"><col class="w-[154px]"><col class="w-[105px]"><col class="w-[78px]"><col class="w-[71px]"><col class="w-[46px]"><col class="w-[141px]"><col class="w-[151px]"><col class="w-[72px]"><col class="w-[72px]"><col class="w-[72px]"></colgroup>
          <thead id="head"></thead>
          <tbody id="cells"></tbody>
        </table>
        <div class="pointer-events-none absolute top-[52px] left-[547px] h-[129px] w-[107px] border-2 border-[#217346]"></div>
        <div class="pointer-events-none absolute top-[51px] left-[543px] h-[133px] w-12 rounded-xs border-4 border-[#ee4b4b]"></div>
      </div>
      <div class="mr-[3px] ml-[3px] flex w-[15px] flex-col bg-[#f0f0f0] pt-0.5">
        <button aria-label="向上滚动" class="flex h-[15px] items-center justify-center border border-[#ababab] bg-white"><svg class="h-1 w-[7px]"><use href="#up"/></svg></button>
        <div class="flex-1 border border-[#ababab] bg-white"></div>
        <button aria-label="向下滚动" class="mt-[18px] flex h-[15px] items-center justify-center border border-[#ababab] bg-white"><svg class="h-1 w-[7px]"><use href="#dn"/></svg></button>
      </div>

      <!-- 浮动工具栏 -->
      <div class="absolute top-[78px] left-[619px] flex h-14 w-[263px] flex-col gap-0.5 border border-[#c6c6c6] bg-white pt-[3px] pl-[3px] shadow-md">
        <div class="flex h-6 items-center">
          <div class="relative h-full w-[68px] border border-[#ababab]"><select aria-label="浮动工具栏字体" class="h-full w-full appearance-none pl-0.5 text-black"><option>宋体</option></select><svg class="pointer-events-none absolute top-2.5 right-1 h-[3px] w-[5px]"><use href="#dn"/></svg></div>
          <div class="relative h-full w-[43px] border border-l-0 border-[#ababab]"><select aria-label="浮动工具栏字号" class="h-full w-full appearance-none pl-[3px] text-black"><option>11</option></select><svg class="pointer-events-none absolute top-2.5 right-1 h-[3px] w-[5px]"><use href="#dn"/></svg></div>
          <button aria-label="增大字号" class="ml-1.5"><svg class="h-[15px] w-3.5"><use href="#Abig"/></svg></button>
          <button aria-label="减小字号" class="ml-2"><svg class="h-[15px] w-3.5"><use href="#Asm"/></svg></button>
          <button aria-label="会计数字格式" class="ml-[5px] flex items-center gap-1.5"><svg class="size-4"><use href="#coin"/></svg><svg class="h-[3px] w-[5px]"><use href="#dn"/></svg></button>
          <button class="ml-2 w-3.5 text-sm">%</button>
          <button aria-label="千位分隔" class="ml-3 mb-1"><svg class="h-[9px] w-1.5"><use href="#comma"/></svg></button>
          <button aria-label="合并后居中" class="ml-[11px]"><svg class="size-[15px]"><use href="#merge"/></svg></button>
        </div>
        <div class="flex h-5 items-center">
          <button class="w-[21px] text-[13px] font-bold">B</button>
          <button class="w-[22px] font-['Liberation_Serif'] text-sm font-bold italic">I</button>
          <button aria-label="居中" class="ml-[5px]"><svg class="h-3 w-3.5"><use href="#ac"/></svg></button>
          <button aria-label="填充颜色" class="ml-[7px] flex items-center gap-1.5"><svg class="size-4"><use href="#fill"/></svg><svg class="h-[3px] w-[5px]"><use href="#dn"/></svg></button>
          <button aria-label="字体颜色" class="ml-[7px] flex items-center gap-1.5"><svg class="size-4"><use href="#fcol"/></svg><svg class="h-[3px] w-[5px]"><use href="#dn"/></svg></button>
          <button aria-label="边框" class="ml-2 flex items-center gap-2"><svg class="size-[13px]"><use href="#bord"/></svg><svg class="h-[3px] w-[5px]"><use href="#dn"/></svg></button>
          <button aria-label="增加小数位数" class="ml-[7px]"><svg class="h-3.5 w-[15px]"><use href="#incd"/></svg></button>
          <button aria-label="减少小数位数" class="ml-[7px]"><svg class="h-3.5 w-[15px]"><use href="#decd"/></svg></button>
          <button aria-label="格式刷" class="ml-2"><svg class="h-3.5 w-4"><use href="#brush"/></svg></button>
        </div>
      </div>

      <!-- 右键菜单 -->
      <div id="menu" role="menu" class="absolute top-[149px] left-[619px] w-[172px] border border-[#c6c6c6] bg-white py-px shadow-md"></div>
      <div class="pointer-events-none absolute top-[333px] left-[619px] h-[27px] w-[122px] border-[3px] border-[#ee4b4b]"></div>
    </div>

    <div class="flex h-[27px] shrink-0 items-start bg-[#f5f5f5]">
      <button aria-label="上一张工作表" class="mt-2.5 ml-[26px] opacity-50"><svg class="h-2 w-[5px]"><use href="#lt"/></svg></button>
      <button aria-label="下一张工作表" class="mt-2.5 ml-6 opacity-50"><svg class="h-2 w-[5px]"><use href="#rt"/></svg></button>
      <button class="ml-10 h-6 w-[69px] border-x border-b-2 border-x-[#ababab] border-b-[#217346] bg-white text-[13px] text-[#217346]">Sheet1</button>
      <button aria-label="新工作表" class="mt-[5px] ml-[33px]"><svg class="size-[17px]"><use href="#plus"/></svg></button>
      <svg class="mt-2 ml-auto h-2.5 w-0.5"><use href="#dots"/></svg>
      <div class="mt-1.5 mr-[21px] ml-[15px] flex h-[15px] w-[498px] bg-[#ebebeb]">
        <button aria-label="向左滚动" class="flex w-[15px] items-center justify-center border border-[#ababab] bg-white"><svg class="h-2 w-[5px]"><use href="#lt"/></svg></button>
        <div class="flex-1 border border-[#ababab] bg-white"></div>
        <button aria-label="向右滚动" class="ml-[34px] flex w-[15px] items-center justify-center border border-[#ababab] bg-white"><svg class="h-2 w-[5px]"><use href="#rt"/></svg></button>
      </div>
    </div>
  </div>

  <aside class="relative mt-0.5 flex w-[260px] shrink-0 flex-col border-l border-[#d4d4d4] pl-3">
    <div class="flex items-start pr-3">
      <h2 class="mt-[9px] text-[21px] leading-[30px] whitespace-nowrap text-[#217346]">数据透视表字段</h2>
      <button aria-label="窗格选项" class="mt-[19px] ml-auto"><svg class="h-[5px] w-[9px]"><use href="#dn"/></svg></button>
      <button aria-label="关闭窗格" class="mt-[15px] ml-2"><svg class="size-3"><use href="#x"/></svg></button>
    </div>
    <div class="mt-1.5 flex h-[27px] items-center justify-between pr-3.5">
      <span>选择要添加到报表的字段:</span>
      <button aria-label="工具" class="flex h-full w-11 items-center justify-center gap-2 border border-[#ababab]"><svg class="h-3 w-3.5"><use href="#gear"/></svg><svg class="h-1 w-[7px]"><use href="#dn"/></svg></button>
    </div>
    <div class="mt-3 mr-3.5 flex min-h-0 flex-1 flex-col bg-[#fcfcfc] pl-px font-bold">
      <label class="flex h-[21px] items-center gap-1.5"><span class="relative flex"><input type="checkbox" checked class="size-[13px] appearance-none border border-[#999] bg-white"><svg class="absolute top-[3px] left-0.5 h-2 w-[9px]"><use href="#tick"/></svg></span>班级</label>
      <label class="flex h-[21px] items-center gap-1.5"><span class="relative flex"><input type="checkbox" checked class="size-[13px] appearance-none border border-[#999] bg-white"><svg class="absolute top-[3px] left-0.5 h-2 w-[9px]"><use href="#tick"/></svg></span>姓名</label>
      <label class="flex h-[21px] items-center gap-1.5"><span class="relative flex"><input type="checkbox" checked class="size-[13px] appearance-none border border-[#999] bg-white"><svg class="absolute top-[3px] left-0.5 h-2 w-[9px]"><use href="#tick"/></svg></span>分数值</label>
      <a href="#more" class="mt-3 font-normal">更多表格...</a>
    </div>
    <div class="mt-4 mr-2.5 border-t border-dotted border-[#bbb] pt-1.5 pl-0.5">在以下区域间拖动字段:</div>
    <div class="mt-[18px] mr-3.5 ml-0.5 grid grid-cols-[116px_1fr]">
      <section class="h-24 border-r border-b border-[#ababab] pt-0.5"><h3 class="flex items-center gap-2 pl-1"><svg class="mb-1 size-[11px]"><use href="#funnel"/></svg>筛选器</h3></section>
      <section class="h-24 border-b border-[#ababab] pt-0.5 pl-[3px]"><h3 class="flex items-center gap-2 pl-1"><svg class="mb-1 size-2.5"><use href="#cols"/></svg>列</h3>
        <div class="relative mt-[7px] h-[23px] border border-[#ababab]"><select aria-label="列字段" class="h-full w-full appearance-none pl-1.5"><option>班级</option></select><svg class="pointer-events-none absolute top-2 right-[9px] h-[5px] w-2"><use href="#dnk"/></svg></div></section>
      <section class="h-[98px] border-r border-[#ababab] pt-[9px] pr-[7px]"><h3 class="flex items-center gap-2 pl-1"><svg class="mb-1 size-2.5"><use href="#rows"/></svg>行</h3>
        <div class="relative mt-[7px] h-[23px] border border-[#ababab]"><select aria-label="行字段" class="h-full w-full appearance-none pl-1.5"><option>分数值</option></select><svg class="pointer-events-none absolute top-2 right-[9px] h-[5px] w-2"><use href="#dnk"/></svg></div></section>
      <section class="h-[98px] pt-[9px] pl-[3px]"><h3 class="flex items-center gap-2 pl-1"><svg class="mb-1 size-2.5"><use href="#sigma"/></svg>值</h3>
        <div class="relative mt-[7px] h-[23px] border border-[#ababab]"><select aria-label="值字段" class="h-full w-full appearance-none pl-1.5"><option>计数项:姓名</option></select><svg class="pointer-events-none absolute top-2 right-[9px] h-[5px] w-2"><use href="#dnk"/></svg></div></section>
    </div>
    <div class="mt-5 mr-3 mb-2.5 flex h-[27px] items-center justify-between">
      <label class="flex items-center gap-2.5"><input type="checkbox" class="size-[13px] appearance-none border border-[#999] bg-white">推迟布局更新</label>
      <button disabled class="h-full w-9 border border-[#e1e1e1] text-[#b5b5b5]">更新</button>
    </div>
    <div class="absolute right-[2px] bottom-2 h-[57px] w-2 overflow-hidden rounded-full bg-[#666] pt-[22px]"><div class="h-full bg-[repeating-linear-gradient(#1fb855_0_2px,#7be09c_2px_3px)]"></div></div>
    <div class="pointer-events-none absolute right-[26px] -bottom-2 z-10 text-[41px] leading-[48px] font-medium whitespace-nowrap text-white [text-shadow:2px_2px_0_#000,1px_1px_0_#000,2px_1px_1px_#000,-1px_-1px_1px_#fff]">头条 @极速手助</div>
  </aside>
</main>

<footer class="shrink-0">
  <div class="flex h-[22px] items-center bg-[#217346] pr-2 pl-[7px] whitespace-nowrap text-white">
    <span>就绪</span>
    <span class="ml-auto">平均值: 46.14285714</span><span class="ml-4">计数: 7</span><span class="ml-4">求和: 323</span>
    <button aria-label="普通视图" class="ml-[18px] flex h-full w-[38px] items-center justify-center bg-[#0a6332]"><svg class="size-[13px]"><use href="#vnorm"/></svg></button>
    <button aria-label="页面布局视图" class="flex w-[38px] justify-center"><svg class="h-[13px] w-3.5"><use href="#vpage"/></svg></button>
    <button aria-label="分页预览" class="flex w-[38px] justify-center"><svg class="h-[13px] w-3.5"><use href="#vbrk"/></svg></button>
    <button aria-label="缩小" class="ml-1 h-0.5 w-1.5 bg-white"></button>
    <div class="mx-1 flex h-3 w-[100px] items-center"><input type="range" aria-label="缩放" value="50" class="h-px w-full appearance-none bg-white [&::-webkit-slider-thumb]:h-[11px] [&::-webkit-slider-thumb]:w-1 [&::-webkit-slider-thumb]:appearance-none [&::-webkit-slider-thumb]:bg-white"></div>
    <button aria-label="放大" class="relative flex h-2 w-2 items-center justify-center"><span class="h-0.5 w-full bg-white"></span><span class="absolute h-full w-0.5 bg-white"></span></button>
    <span class="ml-[18px]">100%</span>
  </div>
  <div class="h-2 overflow-hidden bg-linear-to-r from-[#e6e9ef] to-[#cfdbe9] pr-[74px] pt-[3px] text-right leading-3 text-black">10:20</div>
</footer>

<script>
const grid = 'h-[18px] border-r border-b border-[#d4d4d4] p-0';
const source = [
  ['会计1班','张三',39],['会计1班','李四',63],['会计1班','王五',47],['会计1班','赵六',78],['会计1班','孙七',70],['会计1班','钱八',81],['会计1班','萧九',88],
  ['会计1班','周十',90],['会计1班','吴丽丽',92],['会计1班','郑莉莉',44],['会计2班','冯倩倩',50],['会计2班','陈莹莹',66],['会计2班','蒋英',71],['会计2班','沈花花',69],
  ['会计2班','韩雷雷',81],['会计2班','杨天天',87],['会计2班','朱一一',46],['会计2班','秦翼翼',52],['会计2班','许柳柳',45],['会计2班','何浅浅',39],['会计2班','吕芊芊',78]];
const scores = [...new Set(source.map(r => r[2]))].sort((a, b) => a - b);
const count = (s, c) => source.filter(r => r[2] === s && (!c || r[0] === c)).length || '';
const filterBtn = label => `<button aria-label="${label}" class="flex h-[17px] w-[17px] shrink-0 items-center justify-center border border-[#ababab] bg-[#fcfcfc]"><svg class="h-1 w-[7px]"><use href="#dn"/></svg></button>`;

document.getElementById('head').innerHTML = '<tr><th class="h-[18px] border-r border-b border-r-[#d4d4d4] border-b-[#ababab] p-0"><svg class="ml-5 size-2.5" viewBox="0 0 10 10"><path d="M10 0v10H0z" fill="#dcdcdc"/></svg></th>' +
  [...'ABCDEFGHIJKLMNO'].map(c => c === 'G'
    ? '<th class="h-[18px] border-r border-b-2 border-r-[#d4d4d4] border-b-[#217346] bg-[#e1e1e1] p-0 pt-[3px] font-normal leading-[13px] text-[#217346]">G</th>'
    : `<th class="h-[18px] border-r border-b border-r-[#d4d4d4] border-b-[#ababab] p-0 pt-[3px] font-normal leading-[14px] text-[#444]">${c}</th>`).join('') + '</tr>';

let html = '';
for (let r = 1; r <= 32; r++) {
  const sel = r >= 3 && r <= 9;
  html += sel
    ? `<tr><th class="h-[18px] border-r-2 border-b border-r-[#217346] border-b-[#d4d4d4] bg-[#e1e1e1] p-0 pt-0.5 font-normal text-[#217346]">${r}</th>`
    : `<tr><th class="h-[18px] border-r border-b border-r-[#ababab] border-b-[#e1e1e1] p-0 pt-0.5 font-normal text-[#444]">${r}</th>`;
  if (r === 1) html += ['班级','姓名','分数值'].map(t => `<td class="h-[18px] border-r border-b border-black bg-[#00b050] p-0 pt-0.5 text-center font-bold text-white">${t}</td>`).join('');
  else if (r <= 22) html += source[r - 2].map(t => `<td class="h-[18px] border-r border-b border-black p-0 pt-0.5 text-center">${t}</td>`).join('');
  else html += `<td class="${grid}"></td>`.repeat(3);
  html += `<td class="${grid}"></td>`.repeat(3);
  if (r === 1) {
    html += '<td class="h-[18px] bg-[#ddebf7] p-0 pt-px pl-1 font-bold whitespace-nowrap">计数项:姓名</td>' +
      `<td class="h-[18px] bg-[#ddebf7] p-0 pl-1 font-bold"><div class="flex items-center justify-between"><span class="pt-px">列标签</span>${filterBtn('筛选列标签')}</div></td>` +
      '<td class="bg-[#ddebf7] p-0"></td><td class="bg-[#ddebf7] p-0"></td>';
  } else if (r === 2) {
    html += `<td class="h-[18px] border-b border-[#9bc2e6] bg-[#ddebf7] p-0 pl-1 font-bold"><div class="flex items-center justify-between"><span class="pt-px">行标签</span>${filterBtn('筛选行标签')}</div></td>` +
      ['会计1班','会计2班','总计'].map(t => `<td class="h-[18px] border-b border-[#9bc2e6] bg-[#ddebf7] p-0 pt-0.5 pl-1 font-bold whitespace-nowrap">${t}</td>`).join('');
  } else if (r <= 20) {
    const s = scores[r - 3];
    html += sel && r > 3 ? `<td class="h-[18px] bg-[#c6c6c6] p-0 pt-0.5 pl-[3px] leading-4">${s}</td>` : `<td class="h-[18px] p-0 pt-0.5 pl-[3px] leading-4">${s}</td>`;
    html += `<td class="h-[18px] p-0 pt-0.5 pr-1 text-right leading-4">${count(s, '会计1班')}</td><td class="h-[18px] p-0 pt-0.5 pr-1 text-right leading-4">${count(s, '会计2班')}</td><td class="h-[18px] border-r border-[#d4d4d4] p-0 pt-0.5 pr-0.5 text-right leading-4">${count(s)}</td>`;
  } else if (r === 21) {
    html += '<td class="h-[18px] border-t border-[#9bc2e6] bg-[#ddebf7] p-0 pt-px pl-1 font-bold">总计</td>' +
      [10, 11, 21].map(t => `<td class="h-[18px] border-t border-[#9bc2e6] bg-[#ddebf7] p-0 pt-px pr-1 text-right font-bold">${t}</td>`).join('');
  } else html += `<td class="${grid}"></td>`.repeat(4);
  html += `<td class="${grid}"></td>`.repeat(5) + '</tr>';
}
document.getElementById('cells').innerHTML = html;

const icon = {
  copy: '<svg class="h-3.5 w-[15px]"><use href="#copy"/></svg>', fmt: '<svg class="h-4 w-[15px]"><use href="#fmtc"/></svg>', refr: '<svg class="h-4 w-[15px]"><use href="#refr"/></svg>',
  tick: '<svg class="h-2 w-[9px]"><use href="#tick"/></svg>', grp: '<svg class="h-3.5 w-4"><use href="#grp"/></svg>', ugrp: '<svg class="h-3.5 w-4"><use href="#ugrp"/></svg>',
  del: '<svg class="h-3.5 w-[15px]"><use href="#delx"/></svg>', info: '<svg class="size-4"><use href="#finfo"/></svg>',
  list: '<span class="flex size-5 items-center justify-center border border-[#86bfa0] bg-[#e9f3ed]"><svg class="h-[15px] w-[9px]"><use href="#flist"/></svg></span>'
};
const items = [['copy','复制','C',''],['fmt','设置单元格格式','F','...'],0,['refr','刷新','R',''],0,['','排序','S','>'],['','筛选','T','>'],0,['tick','分类汇总“分数值”','B',''],0,
  ['','展开/折叠','E','>'],0,['grp','创建组','G','...'],['ugrp','取消组合','U','...'],0,['','移动','M','>'],['del','删除“分数值”','V',''],0,['info','字段设置','N','...'],['','数据透视表选项','O','...'],['list','隐藏字段列表','D','']];
document.getElementById('menu').innerHTML = items.map(i => i
  ? `<button role="menuitem" class="flex h-[25px] w-full items-center whitespace-nowrap text-[#555]"><span class="mr-1.5 flex w-[26px] justify-center">${icon[i[0]] || ''}</span><span>${i[1]}(<u>${i[2]}</u>)${i[3] === '...' ? '...' : ''}</span>${i[3] === '>' ? '<svg class="mr-2.5 ml-auto h-2 w-[5px]"><use href="#rt"/></svg>' : ''}</button>`
  : '<div class="mb-px ml-[33px] mr-0.5 h-px bg-[#e1e1e1]"></div>').join('');
</script>
</body>
</html>
